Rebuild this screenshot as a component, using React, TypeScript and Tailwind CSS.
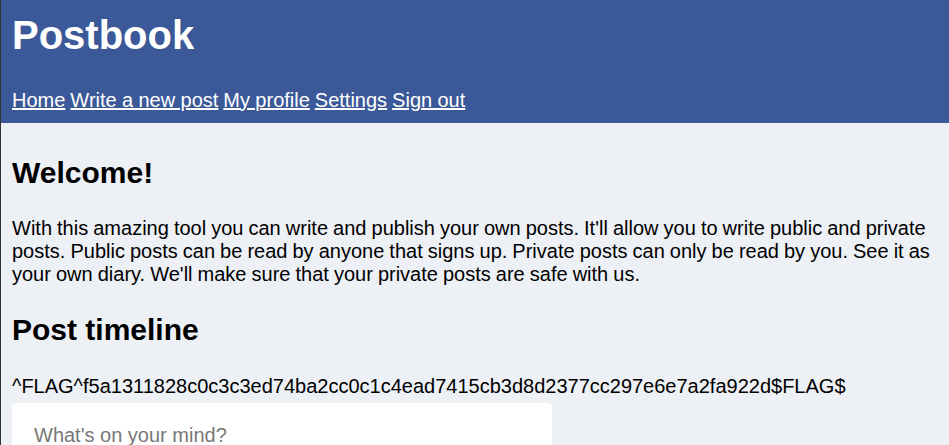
import React from "react";

const navLinks = ["Home", "Write a new post", "My profile", "Settings", "Sign out"];

export default function App() {
  return (
    <div className="min-h-screen border-l border-[#333333] bg-[#edf0f5] font-['Liberation_Sans',Arial,sans-serif] text-[20px] leading-[1.149] text-black">
      <header className="flex h-[123px] flex-col bg-[#3b5998] px-[11px] text-white">
        <h1 className="mt-[12px] text-[40px] font-bold leading-[46px]">Postbook</h1>
        <nav className="mt-[31px] flex gap-[5px] [word-spacing:-0.2px]">
          {navLinks.map((link) => (
            <a key={link} href="#" className="text-white underline">
              {link}
            </a>
          ))}
        </nav>
      </header>

      <main className="px-[11px]">
        <h2 className="mt-[33px] text-[30px] font-bold">Welcome!</h2>
        <p className="mt-[26.5px] [word-spacing:-0.5px]">
          With this amazing tool you can write and publish your own posts. It'll allow you to write
          public and private posts. Public posts can be read by anyone that signs up. Private posts
          can only be read by you. See it as your own diary. We'll make sure that your private posts
          are safe with us.
        </p>

        <h2 className="mt-[27px] text-[30px] font-bold">Post timeline</h2>
        <p className="mt-[27.5px]">
          ^FLAG^f5a1311828c0c3c3ed74ba2cc0c1c4ead7415cb3d8d2377cc297e6e7a2fa922d$FLAG$
        </p>

        <form className="mt-[5px]">
          <textarea
            placeholder="What's on your mind?"
            className="block h-[100px] w-[540px] rounded-[4px] bg-white px-[22px] py-[21px] text-[20px] leading-[1.149] placeholder:text-[#777777] outline-none"
          />
        </form>
      </main>
    </div>
  );
}
